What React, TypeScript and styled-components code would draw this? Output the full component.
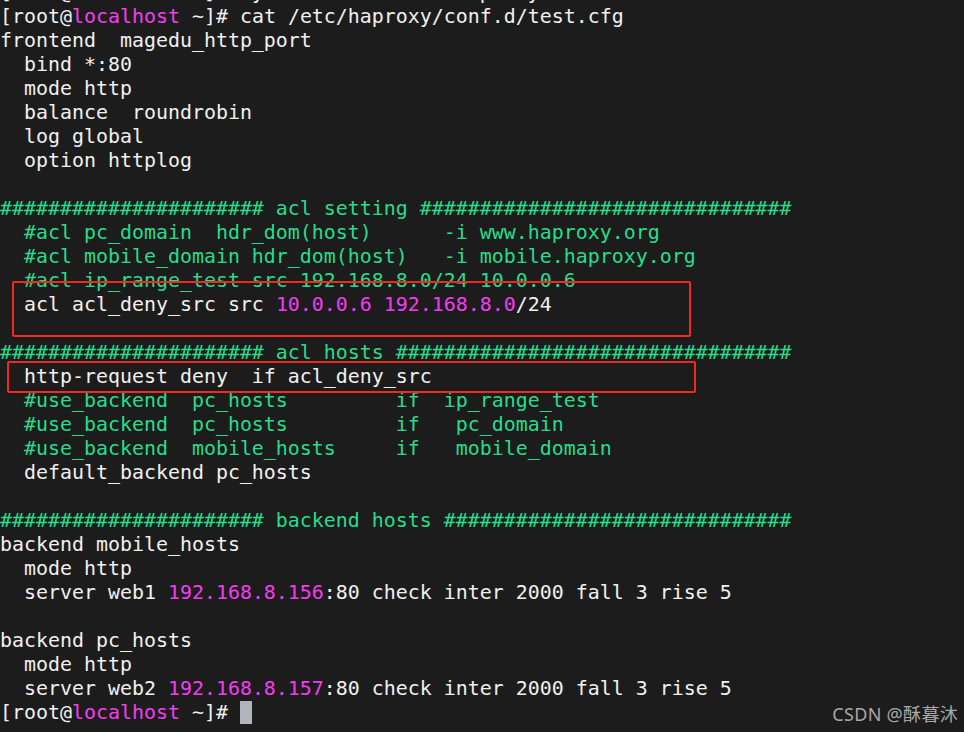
import React from "react";
import styled, { createGlobalStyle } from "styled-components";

const Global = createGlobalStyle`
  html, body {
    margin: 0;
    padding: 0;
    background: #1c1c1c;
    overflow: hidden;
  }
  #root { height: 732px; }
`;

const Screen = styled.div`
  position: relative;
  width: 964px;
  height: 732px;
  background: #1c1c1c;
  overflow: hidden;
  padding-top: 5px;
  box-sizing: border-box;
`;

const Lines = styled.div`
  display: flex;
  flex-direction: column;
  font-family: "DejaVu Sans Mono", "Liberation Mono", monospace;
  font-size: 19.93px;
  color: #f0f0f0;
`;

const Line = styled.div<{ $cut?: boolean }>`
  height: 24px;
  line-height: 24px;
  white-space: pre;
  margin-top: ${(p) => (p.$cut ? "-24px" : "0")};
`;

type Tone = "green" | "magenta";

const Seg = styled.span<{ $tone: Tone }>`
  color: ${(p) => (p.$tone === "green" ? "#27dc8c" : "#f53cf0")};
`;

const Cursor = styled.span`
  display: inline-block;
  width: 12px;
  height: 23px;
  background: #b3b3bb;
  vertical-align: -5px;
`;

const Mark = styled.div<{ $top: number; $left: number; $w: number; $h: number }>`
  position: absolute;
  top: ${(p) => p.$top}px;
  left: ${(p) => p.$left}px;
  width: ${(p) => p.$w}px;
  height: ${(p) => p.$h}px;
  border: 2px solid #f02a22;
  border-radius: 2px;
  box-sizing: border-box;
`;

const Watermark = styled.div`
  position: absolute;
  right: 6px;
  bottom: 6px;
  font-family: "Noto Sans", "Noto Sans CJK SC", sans-serif;
  font-size: 18px;
  color: #a8a8a8;
  letter-spacing: 0.3px;
`;

const G = ({ children }: { children: React.ReactNode }) => <Seg $tone="green">{children}</Seg>;
const M = ({ children }: { children: React.ReactNode }) => <Seg $tone="magenta">{children}</Seg>;

const Prompt = () => (
  <>
    [root@<M>localhost</M> ~]#{" "}
  </>
);

export default function App() {
  return (
    <>
      <Global />
      <Screen>
        <Lines>
          <Line $cut>
            <Prompt />systemctl restart haproxy
          </Line>
          <Line>
            <Prompt />cat /etc/haproxy/conf.d/test.cfg
          </Line>
          <Line>{"frontend  magedu_http_port"}</Line>
          <Line>{"  bind *:80"}</Line>
          <Line>{"  mode http"}</Line>
          <Line>{"  balance  roundrobin"}</Line>
          <Line>{"  log global"}</Line>
          <Line>{"  option httplog"}</Line>
          <Line> </Line>
          <Line>
            <G>{"###################### acl setting ###############################"}</G>
          </Line>
          <Line>
            <G>{"  #acl pc_domain  hdr_dom(host)      -i www.haproxy.org"}</G>
          </Line>
          <Line>
            <G>{"  #acl mobile_domain hdr_dom(host)   -i mobile.haproxy.org"}</G>
          </Line>
          <Line>
            <G>{"  #acl ip_range_test src 192.168.8.0/24 10.0.0.6"}</G>
          </Line>
          <Line>
            {"  acl acl_deny_src src "}
            <M>10.0.0.6</M> <M>192.168.8.0</M>/24
          </Line>
          <Line> </Line>
          <Line>
            <G>{"###################### acl hosts #################################"}</G>
          </Line>
          <Line>{"  http-request deny  if acl_deny_src"}</Line>
          <Line>
            <G>{"  #use_backend  pc_hosts         if  ip_range_test"}</G>
          </Line>
          <Line>
            <G>{"  #use_backend  pc_hosts         if   pc_domain"}</G>
          </Line>
          <Line>
            <G>{"  #use_backend  mobile_hosts     if   mobile_domain"}</G>
          </Line>
          <Line>{"  default_backend pc_hosts"}</Line>
          <Line> </Line>
          <Line>
            <G>{"###################### backend hosts #############################"}</G>
          </Line>
          <Line>{"backend mobile_hosts"}</Line>
          <Line>{"  mode http"}</Line>
          <Line>
            {"  server web1 "}
            <M>192.168.8.156</M>
            {":80 check inter 2000 fall 3 rise 5"}
          </Line>
          <Line> </Line>
          <Line>{"backend pc_hosts"}</Line>
          <Line>{"  mode http"}</Line>
          <Line>
            {"  server web2 "}
            <M>192.168.8.157</M>
            {":80 check inter 2000 fall 3 rise 5"}
          </Line>
          <Line>
            <Prompt />
            <Cursor />
          </Line>
        </Lines>
        <Mark $top={281} $left={12} $w={679} $h={56} />
        <Mark $top={361} $left={7} $w={689} $h={32} />
        <Watermark>CSDN @酥暮沐</Watermark>
      </Screen>
    </>
  );
}
